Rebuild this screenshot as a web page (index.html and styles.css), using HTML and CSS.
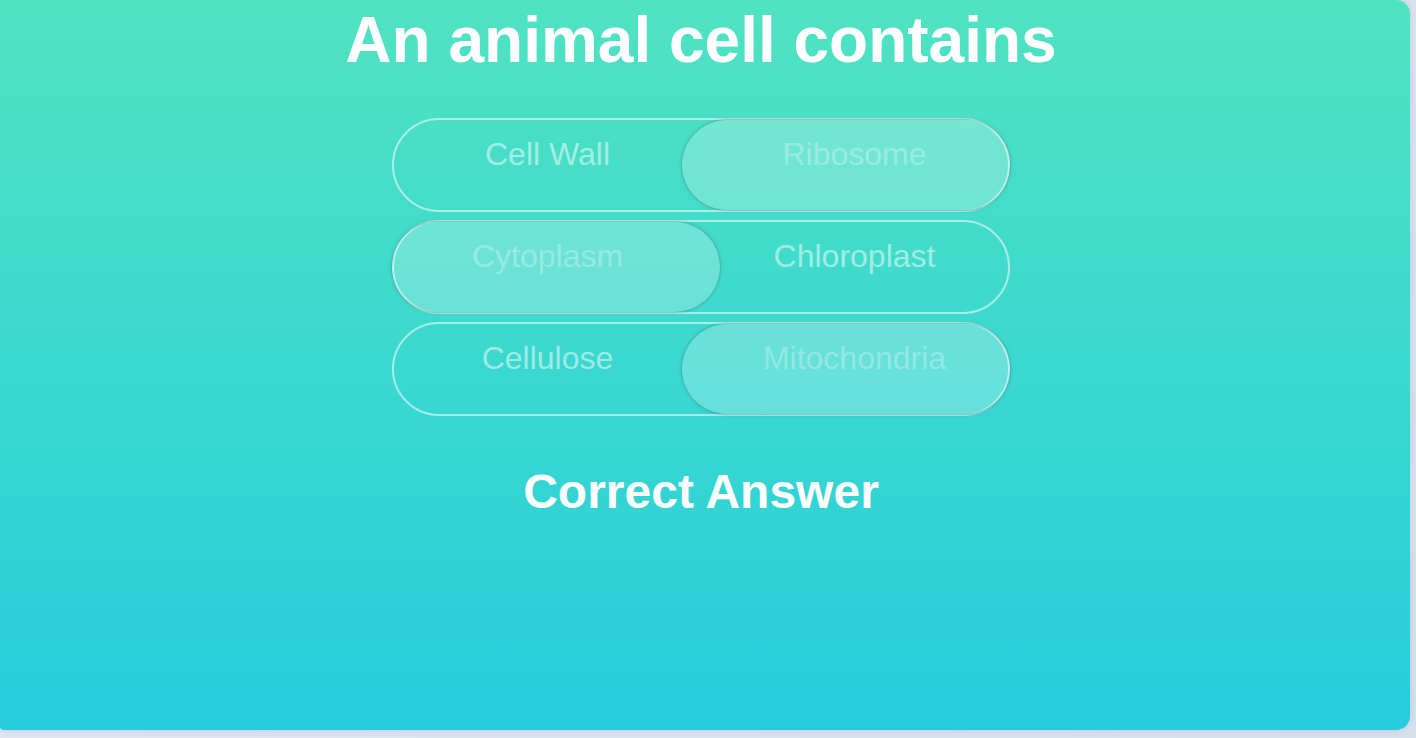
FILE: index.html
```html
<!DOCTYPE html>
<html>
<head>
<meta charset="utf-8">
<link rel="stylesheet" href="styles.css">
</head>
<body>
<div class="card">
  <h1 class="title">An animal cell contains</h1>
  <div class="options">
    <div class="toggle">
      <div class="pill pill-right"></div>
      <span class="label">Cell Wall</span>
      <span class="label selected">Ribosome</span>
    </div>
    <div class="toggle">
      <div class="pill pill-left"></div>
      <span class="label selected">Cytoplasm</span>
      <span class="label">Chloroplast</span>
    </div>
    <div class="toggle">
      <div class="pill pill-right"></div>
      <span class="label">Cellulose</span>
      <span class="label selected">Mitochondria</span>
    </div>
  </div>
  <h2 class="result">Correct Answer</h2>
</div>
</body>
</html>
```

FILE: styles.css
```css
html, body {
  margin: 0;
  padding: 0;
}
body {
  width: 1416px;
  height: 738px;
  background: linear-gradient(135deg, #e3e8f1 0%, #d6e0ec 100%);
  font-family: "Liberation Sans", Arial, sans-serif;
  overflow: hidden;
}
.card {
  box-sizing: border-box;
  width: 1410px;
  height: 730px;
  padding-right: 8px;
  border-radius: 0 14px 14px 4px;
  background: linear-gradient(to bottom, #50e3c2 0%, #25cddc 100%);
  display: flex;
  flex-direction: column;
  align-items: center;
  box-shadow: 0 0 6px rgba(120, 140, 170, 0.25);
}
.title {
  margin: 0;
  padding-top: 3px;
  font-size: 64px;
  font-weight: bold;
  line-height: normal;
  color: #ffffff;
}
.options {
  margin-top: 41px;
  display: flex;
  flex-direction: column;
  gap: 8px;
}
.toggle {
  position: relative;
  box-sizing: border-box;
  width: 618px;
  height: 94px;
  border: 2px solid rgba(255, 255, 255, 0.55);
  border-radius: 47px;
  display: grid;
  grid-template-columns: 1fr 1fr;
}
.pill {
  position: absolute;
  top: 0;
  width: 328px;
  height: 90px;
  border-radius: 45px;
  background: rgba(255, 255, 255, 0.23);
  box-shadow: 0 0 0 1px rgba(110, 140, 140, 0.3), 0 0 4px rgba(0, 0, 0, 0.18);
}
.pill-right {
  right: -2px;
}
.pill-left {
  left: -2px;
}
.label {
  position: relative;
  text-align: center;
  padding-top: 16px;
  font-size: 32px;
  line-height: normal;
  color: rgba(255, 255, 255, 0.51);
}
.label.selected {
  color: rgba(255, 255, 255, 0.3);
}
.result {
  margin: 48px 0 0;
  font-size: 48px;
  font-weight: bold;
  line-height: normal;
  color: #ffffff;
}
```
